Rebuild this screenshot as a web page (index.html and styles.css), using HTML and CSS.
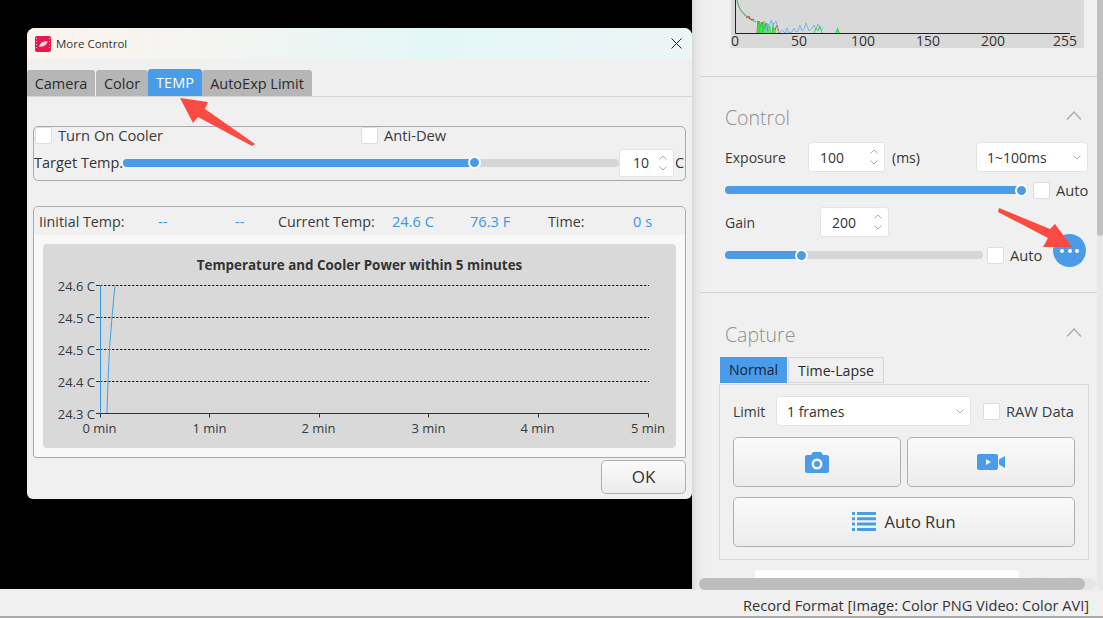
FILE: index.html
```html
<!DOCTYPE html>
<html lang="en">
<head>
<meta charset="utf-8">
<title>More Control</title>
<link rel="stylesheet" href="styles.css">
</head>
<body>
<div class="app">
  <main class="viewport">
    <section class="dialog">
      <header class="titlebar">
        <svg class="app-icon" viewBox="0 0 16 16"><rect width="16" height="16" rx="2" fill="#e5194f"/><path d="M4 10.500C5 7 9 4.500 12.500 5.500c-.5 3.500-4.500 6-8.500 5z" fill="#f8d5de"/><path d="M1.500 2v12M14.500 2v12" stroke="#f9b8c8" stroke-width="1" stroke-dasharray="1 2"/></svg>
        <span class="title">More Control</span>
        <svg class="close" viewBox="0 0 11 11"><path d="M.5.5l10 10M10.500.5l-10 10" stroke="#222" fill="none"/></svg>
      </header>
      <nav class="dlg-tabs">
        <span class="dlg-tab tab-camera">Camera</span>
        <span class="dlg-tab tab-color">Color</span>
        <span class="dlg-tab tab-temp">TEMP</span>
        <span class="dlg-tab tab-auto">AutoExp Limit</span>
      </nav>
      <div class="dlg-body">
        <div class="group cooler">
          <div class="cooler-row1">
            <label class="check-label cooler-check"><i class="check"></i>Turn On Cooler</label>
            <label class="check-label"><i class="check"></i>Anti-Dew</label>
          </div>
          <div class="cooler-row2">
            <span class="target-label">Target Temp.</span>
            <div class="slider target-slider"><div class="fill fill-target"></div><i class="knob"></i></div>
            <div class="spin spin-temp"><span>10</span>
              <svg class="arrows" viewBox="0 0 8 16"><path d="M.5 4.500L4 1l3.500 3.500M.5 11.500L4 15l3.500-3.500" fill="none" stroke="#aaa"/></svg>
            </div>
            <span class="unit">C</span>
          </div>
        </div>
        <div class="group monitor">
          <div class="readout">
            <span class="r-label r1">Iinitial Temp:</span>
            <span class="r-val r2">--</span>
            <span class="r-val r3">--</span>
            <span class="r-label r4">Current Temp:</span>
            <span class="r-val r5">24.6 C</span>
            <span class="r-val r6">76.3 F</span>
            <span class="r-label r7">Time:</span>
            <span class="r-val r8">0 s</span>
          </div>
          <div class="chart-wrap">
            <svg class="chart" width="633" height="204" viewBox="43 244 633 204">
              <text class="c-title" x="359.500" y="270" text-anchor="middle">Temperature and Cooler Power within 5 minutes</text>
              <g class="c-grid">
                <path d="M100 285.500H649M100 317.500H649M100 349.500H649M100 381.500H649"/>
              </g>
              <path d="M96 285.500h4M96 317.500h4M96 349.500h4M96 381.500h4M96 413.500h4M100.500 413.500H648.500M100.500 413.500v4M209.500 413.500v4M319.500 413.500v4M428.500 413.500v4M538.500 413.500v4M648.500 413.500v4" stroke="#333" fill="none"/>
              <g class="c-axis">
                <text x="95" y="291" text-anchor="end">24.6 C</text>
                <text x="95" y="323" text-anchor="end">24.5 C</text>
                <text x="95" y="355" text-anchor="end">24.5 C</text>
                <text x="95" y="387" text-anchor="end">24.4 C</text>
                <text x="95" y="419" text-anchor="end">24.3 C</text>
                <text x="99.500" y="433" text-anchor="middle">0 min</text>
                <text x="209.500" y="433" text-anchor="middle">1 min</text>
                <text x="318.500" y="433" text-anchor="middle">2 min</text>
                <text x="428.500" y="433" text-anchor="middle">3 min</text>
                <text x="537.500" y="433" text-anchor="middle">4 min</text>
                <text x="648" y="433" text-anchor="middle">5 min</text>
              </g>
              <path d="M100.500 285V413" fill="none" stroke="#2c9be6"/>
              <path d="M107 413L108 381 109.500 349 112 317 115 285" fill="none" stroke="#3fa2e6"/>
            </svg>
          </div>
        </div>
        <div class="dlg-foot"><button class="btn ok">OK</button></div>
      </div>
    </section>
    <svg class="arrow arrow-one" width="90" height="60" viewBox="175 95 90 60"><path d="M180 98L208 102 205 109 255 144 252 146 198 117 193 123z" fill="#fb4a42"/></svg>
  </main>

  <aside class="sidebar">
    <div class="histogram-area">
      <div class="histogram">
        <svg class="hist" width="353" height="48" viewBox="731 0 353 48">
          <path d="M735.500 0V33.500H1070" fill="none" stroke="#222"/>
          <path d="M737 0L739 7 742 12 746 16 750 19 756 22" fill="none" stroke="#5fae7e" stroke-width="1.200"/>
          <path d="M746 18l3-2 2 4 3-1M757 33l1-12 2 6 2-5 2 7 2-6 2 8M772 33l1-6 2 3 2-5 2 8" fill="none" stroke="#c44" stroke-width="1"/>
          <path d="M758 33V22M759.500 33V21M761 33V23M762.500 33V24M764 33V21M766 33V25M768 33V24M770 33V26M773 33V23M775 33V28M836 33l1.500-4 1.500 4" fill="none" stroke="#1de23a" stroke-width="1.300"/>
          <path d="M766 33l1-10 2 5 2-8 2 5 3-4 2 10 2 2 2-3 3 3 2-5 2 5 3-1 2-4 2 4 2-1 2-6 2 6 2-2 2-6 3 8 3-3 2-3 2 4 2-5 3 6 2-2" fill="none" stroke="#7db3ea" stroke-width="1"/>
          <path d="M814 33l2-5 2 3 2-5 2 7" fill="none" stroke="#38d85a" stroke-width="1"/>
          <g class="h-axis">
            <text x="735" y="46" text-anchor="middle">0</text>
            <text x="799" y="46" text-anchor="middle">50</text>
            <text x="863" y="46" text-anchor="middle">100</text>
            <text x="928" y="46" text-anchor="middle">150</text>
            <text x="993" y="46" text-anchor="middle">200</text>
            <text x="1065" y="46" text-anchor="middle">255</text>
          </g>
        </svg>
      </div>
    </div>

    <section class="panel control">
      <div class="panel-head"><h2>Control</h2>
        <svg class="chevron" viewBox="0 0 16 9"><path d="M1 8.500L8 1l7 7.500" fill="none" stroke="#aaa" stroke-width="1.300"/></svg>
      </div>
      <div class="row exposure-row">
        <span class="lbl">Exposure</span>
        <div class="spin spin-exp"><span>100</span>
          <svg class="arrows" viewBox="0 0 8 16"><path d="M.5 4.500L4 1l3.500 3.500M.5 11.500L4 15l3.500-3.500" fill="none" stroke="#aaa"/></svg>
        </div>
        <span class="ms">(ms)</span>
        <div class="combo combo-range"><span>1~100ms</span>
          <svg class="down" viewBox="0 0 8 5"><path d="M.5.500L4 4l3.500-3.500" fill="none" stroke="#aaa"/></svg>
        </div>
      </div>
      <div class="row slider-row exp-slider-row">
        <div class="slider exp-slider"><div class="fill fill-exp"></div><i class="knob"></i></div>
        <label class="check-label"><i class="check"></i>Auto</label>
      </div>
      <div class="row gain-row">
        <span class="lbl gain-lbl">Gain</span>
        <div class="spin spin-gain"><span>200</span>
          <svg class="arrows" viewBox="0 0 8 16"><path d="M.5 4.500L4 1l3.500 3.500M.5 11.500L4 15l3.500-3.500" fill="none" stroke="#aaa"/></svg>
        </div>
      </div>
      <div class="row slider-row gain-slider-row">
        <div class="slider gain-slider"><div class="fill fill-gain"></div><i class="knob"></i></div>
        <label class="check-label"><i class="check"></i>Auto</label>
      </div>
      <button class="more" aria-label="More"><i></i><i></i><i></i></button>
    </section>

    <section class="panel capture">
      <div class="panel-head"><h2>Capture</h2>
        <svg class="chevron" viewBox="0 0 16 9"><path d="M1 8.500L8 1l7 7.500" fill="none" stroke="#aaa" stroke-width="1.300"/></svg>
      </div>
      <div class="cap-tabs"><span class="cap-tab active">Normal</span><span class="cap-tab">Time-Lapse</span></div>
      <div class="cap-body">
        <div class="row limit-row">
          <span class="lbl limit-lbl">Limit</span>
          <div class="combo combo-limit"><span>1 frames</span>
            <svg class="down" viewBox="0 0 8 5"><path d="M.5.500L4 4l3.500-3.500" fill="none" stroke="#aaa"/></svg>
          </div>
          <label class="check-label"><i class="check"></i>RAW Data</label>
        </div>
        <div class="cap-buttons">
          <button class="btn big" aria-label="Capture image">
            <svg width="24" height="21" viewBox="0 0 24 21"><path fill-rule="evenodd" fill="#4a9be8" d="M8 0h8l2 3h4a2 2 0 0 1 2 2v14a2 2 0 0 1-2 2H2a2 2 0 0 1-2-2V5a2 2 0 0 1 2-2h4zM12 6.500a5.500 5.500 0 1 0 0 11 5.500 5.500 0 0 0 0-11zM12 9a3 3 0 1 1 0 6 3 3 0 0 1 0-6z"/></svg>
          </button>
          <button class="btn big" aria-label="Record video">
            <svg width="28" height="16" viewBox="0 0 28 16"><path fill-rule="evenodd" fill="#4a9be8" d="M2 0h17a2 2 0 0 1 2 2v12a2 2 0 0 1-2 2H2a2 2 0 0 1-2-2V2a2 2 0 0 1 2-2zM9 5v6l5-3z"/><path fill="#4a9be8" d="M22 5.500l6-3.500v12l-6-3.500z"/></svg>
          </button>
        </div>
        <button class="btn big wide">
          <svg width="24" height="19" viewBox="0 0 24 19"><path fill="#4a9be8" d="M0 0h3v3H0zM5 0h19v3H5zM0 5.300h3v3H0zM5 5.300h19v3H5zM0 10.600h3v3H0zM5 10.600h19v3H5zM0 16h3v3H0zM5 16h19v3H5z"/></svg>
          <span>Auto Run</span>
        </button>
      </div>
      <div class="clipped-row">
        <div class="clipped-input"></div>
        <i class="faint"></i>
        <i class="faint"></i>
      </div>
    </section>

    <div class="vscroll"><i></i></div>
    <div class="hscroll"><i></i></div>
  </aside>
</div>
<footer class="statusbar">Record Format [Image: Color PNG Video: Color AVI]</footer>
<svg class="arrow arrow-two" width="80" height="44" viewBox="995 205 80 44"><path d="M999 208L1050 229 1055 224 1072 247 1043 247 1048 238 998 212z" fill="#fb4a42"/></svg>
</body>
</html>
```

FILE: styles.css
```css
* { box-sizing: border-box; }
html, body { margin: 0; height: 100%; }
body {
  width: 1103px; height: 618px; overflow: hidden; position: relative;
  font-family: "Open Sans", "Noto Sans", sans-serif; font-size: 14.500px; color: #333;
  background: #f0f0f0;
}
.app { display: flex; height: 590px; }
.viewport { width: 692px; flex: none; background: #000; position: relative; height: 589px; }
.sidebar {
  flex: 1; position: relative; overflow: hidden; padding-left: 7px;
  background: linear-gradient(90deg, #d8d8d8 0, #e9e9e9 5px, #f0f0f0 14px);
}
.statusbar {
  height: 28px; border-bottom: 2px solid #aaa; text-align: right; font-size: 14.600px;
  padding: 5px 14px 0 0; line-height: 21px; background: #f0f0f0;
}

/* dialog */
.dialog {
  position: absolute; left: 27px; top: 28px; width: 665px; height: 471px;
  background: #f0f0f0; border-radius: 8px 8px 6px 6px; overflow: hidden;
  display: flex; flex-direction: column;
}
.titlebar {
  height: 31px; flex: none; display: flex; align-items: center; padding: 0 10px 0 8px;
  background: linear-gradient(90deg, #fcf3ee 0, #f3f5f2 30%, #e3f7f6 60%, #edf5f6 100%);
}
.app-icon { width: 16px; height: 16px; flex: none; }
.title { font-size: 11.500px; margin-left: 5px; flex: 1; }
.close { width: 11px; height: 11px; }
.dlg-tabs { height: 38px; flex: none; display: flex; align-items: flex-end; border-bottom: 1px solid #d6d6d6; }
.dlg-tab {
  height: 26px; line-height: 27px; background: #b6b6b6; color: #2b2b2b; text-align: center;
  border-radius: 3px 3px 0 0;
}
.tab-camera { width: 68px; }
.tab-color { width: 52px; margin-left: 1px; }
.tab-temp { width: 54px; height: 27px; background: #4a9be8; color: #fff; }
.tab-auto { width: 110px; }
.dlg-body { flex: 1; padding: 29px 6px 6px; display: flex; flex-direction: column; }
.group { border: 1px solid #a9a9a9; border-radius: 5px; }
.cooler { height: 55px; }
.cooler-row1 { display: flex; padding-left: 1px; height: 19px; }
.cooler-check { width: 326px; }
.cooler-row2 { display: flex; align-items: center; height: 29px; margin-top: 2px; }
.target-label { width: 89px; white-space: nowrap; flex: none; }
.target-slider { width: 496px; }
.fill-target { width: 351px; }
.spin-temp { width: 55px; height: 28px; padding-left: 13px; flex: none; }
.unit { margin-left: 1px; }
.check-label { display: inline-flex; align-items: flex-start; gap: 6px; white-space: nowrap; color: #3a3a3a; font-size: 14.700px; line-height: 17px; }
.check { width: 17px; height: 17px; background: #fff; border: 1px solid #ddd; border-radius: 2px; flex: none; }
.slider { height: 8px; border-radius: 4px; background: #d6d6d6; position: relative; flex: none; display: flex; align-items: center; }
.fill { height: 8px; border-radius: 4px; background: #4a9be8; position: relative; }
.knob {
  width: 13px; height: 13px; border-radius: 50%; background: #4a9be8; border: 2px solid #fff;
  flex: none; margin-left: -6px; position: relative;
}
.spin {
  background: #fff; border: 1px solid #e4e4e4; border-radius: 3px; display: flex; align-items: center;
  position: relative; color: #333; font-size: 14px;
}
.arrows { width: 8px; height: 16px; position: absolute; right: 6px; top: 50%; margin-top: -8px; }
.monitor { height: 252px; margin-top: 25px; background: #f8f8f8; border-bottom-left-radius: 3px; border-bottom-right-radius: 0; }
.readout {
  height: 28px; background: #f0f0f0; display: grid; align-items: center; border-radius: 5px 5px 0 0;
  grid-template-columns: 119px 77px 43px 114px 78px 78px 85px auto; padding-left: 5px;
}
.r-val { color: #3a96e6; font-size: 14.600px; }
.r-label { color: #3a3a3a; white-space: nowrap; font-size: 14.300px; }
.chart-wrap { padding: 9px 9px 0; }
.chart { display: block; background: #d9d9d9; border-radius: 4px; }
.chart text { font-family: "Open Sans", "Noto Sans", sans-serif; }
.c-title { font-size: 13.400px; font-weight: 700; fill: #333; }
.c-grid path { stroke: #222; stroke-dasharray: 2.500 1.500; fill: none; }
.c-axis text { font-size: 13px; fill: #3a3a3a; }
.dlg-foot { display: flex; justify-content: flex-end; margin-top: 2px; }
.btn {
  font: inherit; color: #333; background: linear-gradient(#fafafa, #ececec);
  border: 1px solid #b0b0b0; border-radius: 5px; padding: 0; display: flex; align-items: center; justify-content: center;
}
.ok { width: 85px; height: 34px; font-size: 17px; padding-bottom: 2px; }

/* sidebar */
.histogram-area { height: 77px; margin-right: 6px; padding-left: 32px; border-bottom: 1px solid #d2d2d2; }
.histogram { width: 353px; height: 48px; background: #d9d9d9; }
.hist { display: block; overflow: visible; }
.hist text { font-family: "Open Sans", "Noto Sans", sans-serif; font-size: 14px; fill: #333; }
.panel { margin-right: 6px; position: relative; }
.panel-head { height: 28px; display: flex; align-items: center; justify-content: space-between; padding: 0 15px 0 26px; }
.panel-head h2 { margin: 0; font-size: 19.500px; font-weight: 300; color: #8f8f8f; }
.chevron { width: 16px; height: 9px; margin-top: -3px; }
.control { height: 216px; padding-top: 26px; border-bottom: 1px solid #d2d2d2; }
.row { display: flex; align-items: center; }
.lbl { color: #3a3a3a; font-size: 14px; }
.exposure-row { height: 30px; margin-top: 11px; padding-left: 26px; }
.exposure-row .lbl { width: 83px; }
.spin-exp { width: 77px; height: 30px; padding-left: 11px; }
.ms { margin-left: 7px; width: 84px; font-size: 14px; }
.combo {
  background: #fff; border: 1px solid #e4e4e4; border-radius: 3px; display: flex; align-items: center;
  justify-content: space-between; height: 30px; padding: 0 6px 0 10px; font-size: 14px;
}
.down { width: 8px; height: 5px; }
.combo-range { width: 112px; }
.slider-row { padding-left: 26px; }
.exp-slider-row { height: 18px; margin-top: 9px; gap: 5px; }
.exp-slider { width: 303px; }
.fill-exp { width: 298px; }
.gain-row { height: 30px; margin-top: 8px; padding-left: 26px; }
.gain-lbl { width: 95px; }
.spin-gain { width: 69px; height: 30px; padding-left: 11px; }
.gain-slider-row { height: 18px; margin-top: 9px; gap: 4px; }
.gain-slider { width: 258px; }
.fill-gain { width: 76px; }
.more {
  position: absolute; left: 354px; top: 157px; width: 33px; height: 33px; border-radius: 50%; border: 0; padding: 0;
  background: #4a9be8; display: flex; align-items: center; justify-content: center; gap: 3.500px;
}
.more i { width: 4px; height: 4px; background: #fff; border-radius: 50%; }
.capture { padding-top: 27px; }
.cap-tabs { display: flex; height: 27px; margin: 9px 0 0 21px; gap: 1px; }
.cap-tab { height: 26px; line-height: 25px; width: 96px; text-align: center; border: 1px solid #d6d6d6; color: #2b2b2b; font-size: 14.200px; }
.cap-tab.active { width: 67px; background: #4a9be8; border: 0; color: #10253a; font-size: 14px; }
.cap-body { margin-left: 20px; width: 370px; height: 176px; border: 1px solid #d8d8d8; padding: 11px 13px 0; }
.limit-row { height: 30px; }
.limit-lbl { width: 43px; }
.combo-limit { width: 195px; margin-right: 12px; }
.cap-buttons { display: flex; gap: 6px; margin-top: 11px; }
.big { height: 50px; width: 168px; }
.wide { width: 342px; margin-top: 10px; gap: 8px; font-size: 16.500px; padding-bottom: 1px; }
.clipped-row { display: flex; align-items: flex-start; margin: 10px 0 0 56px; gap: 10px; }
.clipped-input { width: 264px; height: 30px; background: #fff; border-radius: 3px 3px 0 0; }
.faint { width: 16px; height: 16px; margin-top: 7px; border-radius: 50%; background: #e2e5e9; }
.faint + .faint { margin-left: 7px; }
.vscroll { position: absolute; right: 0; top: 0; bottom: 0; width: 6px; background: #e8e8e8; }
.vscroll i { display: block; height: 236px; background: #c0c0c0; border-radius: 0 0 3px 3px; }
.hscroll { position: absolute; left: 7px; top: 578px; width: 398px; height: 12px; background: #e6e6e6; border-radius: 6px; }
.hscroll i { display: block; width: 386px; height: 12px; background: #bdbdbd; border-radius: 6px; }

/* annotations */
.arrow { position: absolute; }
.arrow-one { left: 175px; top: 95px; }
.arrow-two { left: 995px; top: 205px; }
```
